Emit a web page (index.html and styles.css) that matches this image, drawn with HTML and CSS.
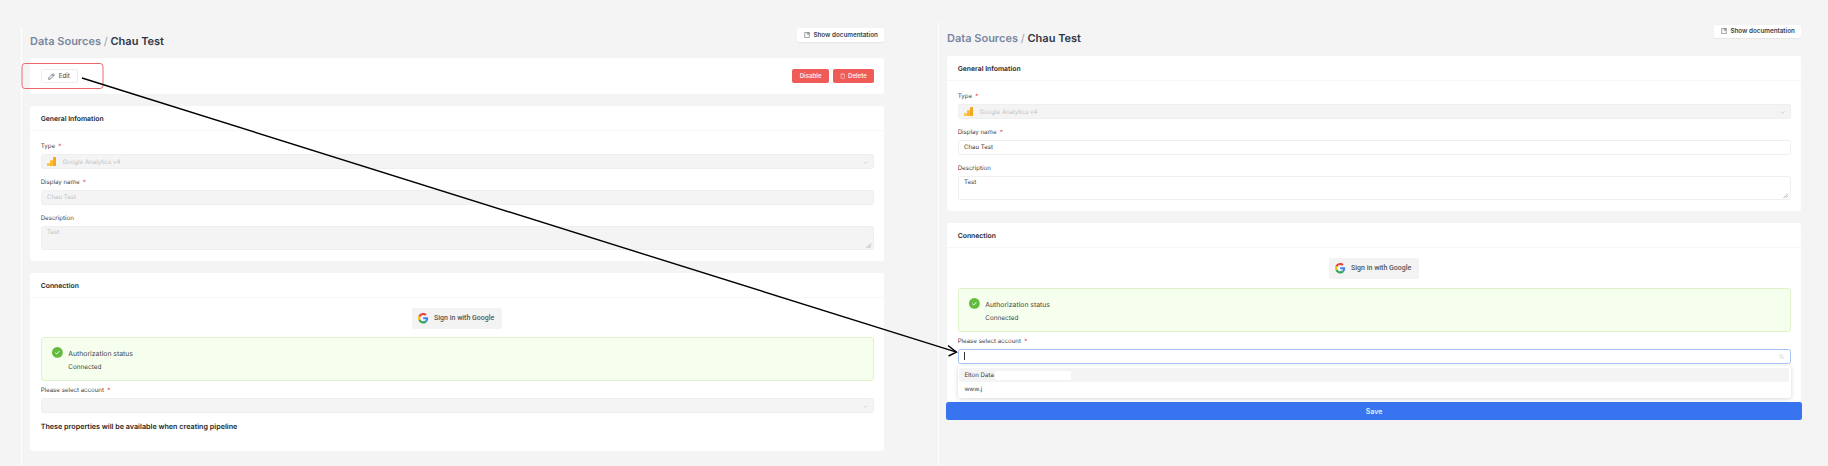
FILE: index.html
```html
<!DOCTYPE html>
<html lang="en">
<head>
<meta charset="utf-8">
<title>Chau Test</title>
<link rel="stylesheet" href="styles.css">
</head>
<body>
<main class="page">
  <section class="panel panel-left">
    <header class="head head-left">
      <h1 class="crumb"><span class="crumb-muted">Data Sources</span> <span class="crumb-sep">/</span> Chau Test</h1>
      <button class="doc-btn"><svg class="ico-doc" viewBox="0 0 12 12"><path d="M1.5.7h9v10.6h-9zM6.6.7v4l1.6-1 1.6 1v-4" fill="none" stroke="currentColor" stroke-width="1"/></svg>Show documentation</button>
    </header>
    <div class="card actions">
      <button class="btn-edit"><svg class="ico-edit" viewBox="0 0 12 12"><path d="M1.6 8 7.6 2a1.7 1.7 0 0 1 2.4 2.4l-6 6-2.8.5zM6.8 2.8l2.4 2.4" fill="none" stroke="currentColor" stroke-width="1.1"/></svg>Edit</button>
      <div class="actions-right">
        <button class="btn-red btn-disable">Disable</button>
        <button class="btn-red btn-delete"><svg class="ico-trash" viewBox="0 0 12 12"><path d="M1 2.5h10M4 2.5V1h4v1.5M2.3 2.5v8.7h7.4V2.5" fill="none" stroke="currentColor" stroke-width="1"/></svg>Delete</button>
      </div>
    </div>
    <div class="card">
      <h2 class="card-title">General Infomation</h2>
      <div class="card-body">
        <div class="field">
          <label class="label">Type <em class="req">*</em></label>
          <div class="control disabled select">
            <svg class="ico-ga" viewBox="0 0 10 10"><rect x="0" y="6.4" width="3.6" height="3.6" fill="#f9c74f"/><rect x="3.2" y="3.4" width="3.6" height="6.6" fill="#fbbc2c"/><rect x="6.4" y="0" width="3.6" height="10" fill="#f5a623"/></svg>
            <span class="ghost">Google Analytics v4</span>
            <svg class="ico-chev" viewBox="0 0 10 10"><path d="M1 3l4 4 4-4" fill="none" stroke="currentColor" stroke-width="1"/></svg>
          </div>
        </div>
        <div class="field">
          <label class="label">Display name <em class="req">*</em></label>
          <div class="control disabled"><span class="ghost">Chau Test</span></div>
        </div>
        <div class="field-last">
          <label class="label">Description</label>
          <div class="control area disabled"><span class="ghost">Test</span><svg class="ico-grip" viewBox="0 0 6 6"><path d="M.5 5.5l5-5M3 5.5l2.5-2.5" fill="none" stroke="#777" stroke-width=".6"/></svg></div>
        </div>
      </div>
    </div>
    <div class="card">
      <h2 class="card-title">Connection</h2>
      <div class="card-body conn">
        <button class="google"><svg class="ico-g" viewBox="0 0 48 48"><path fill="#EA4335" d="M24 9.5c3.54 0 6.71 1.22 9.21 3.6l6.85-6.85C35.9 2.38 30.47 0 24 0 14.62 0 6.51 5.38 2.56 13.22l7.98 6.19C12.43 13.72 17.74 9.5 24 9.5z"/><path fill="#4285F4" d="M46.98 24.55c0-1.57-.15-3.09-.38-4.55H24v9.02h12.94c-.58 2.96-2.26 5.48-4.78 7.18l7.73 6c4.51-4.18 7.09-10.36 7.09-17.65z"/><path fill="#FBBC05" d="M10.53 28.59c-.48-1.45-.76-2.99-.76-4.59s.27-3.14.76-4.59l-7.98-6.19C.92 16.46 0 20.12 0 24c0 3.88.92 7.54 2.56 10.78l7.97-6.19z"/><path fill="#34A853" d="M24 48c6.48 0 11.93-2.13 15.89-5.81l-7.73-6c-2.15 1.45-4.92 2.3-8.16 2.3-6.26 0-11.57-4.22-13.47-9.91l-7.98 6.19C6.51 42.62 14.62 48 24 48z"/></svg>Sign in with Google</button>
        <div class="alert">
          <div class="alert-row"><svg class="ico-ok" viewBox="0 0 12 12"><circle cx="6" cy="6" r="6" fill="#62bb3e"/><path d="M3.6 6.2l1.7 1.6 3-3.3" fill="none" stroke="#fff" stroke-width="1"/></svg>Authorization status</div>
          <div class="alert-sub">Connected</div>
        </div>
        <label class="label">Please select account <em class="req">*</em></label>
        <div class="control disabled select"><svg class="ico-chev" viewBox="0 0 10 10"><path d="M1 3l4 4 4-4" fill="none" stroke="currentColor" stroke-width="1"/></svg></div>
        <p class="props">These properties will be available when creating pipeline</p>
      </div>
    </div>
  </section>

  <section class="panel panel-right">
    <header class="head head-right">
      <h1 class="crumb"><span class="crumb-muted">Data Sources</span> <span class="crumb-sep">/</span> Chau Test</h1>
      <button class="doc-btn"><svg class="ico-doc" viewBox="0 0 12 12"><path d="M1.5.7h9v10.6h-9zM6.6.7v4l1.6-1 1.6 1v-4" fill="none" stroke="currentColor" stroke-width="1"/></svg>Show documentation</button>
    </header>
    <div class="card">
      <h2 class="card-title">General Infomation</h2>
      <div class="card-body">
        <div class="field">
          <label class="label">Type <em class="req">*</em></label>
          <div class="control disabled select">
            <svg class="ico-ga" viewBox="0 0 10 10"><rect x="0" y="6.4" width="3.6" height="3.6" fill="#f9c74f"/><rect x="3.2" y="3.4" width="3.6" height="6.6" fill="#fbbc2c"/><rect x="6.4" y="0" width="3.6" height="10" fill="#f5a623"/></svg>
            <span class="ghost">Google Analytics v4</span>
            <svg class="ico-chev" viewBox="0 0 10 10"><path d="M1 3l4 4 4-4" fill="none" stroke="currentColor" stroke-width="1"/></svg>
          </div>
        </div>
        <div class="field">
          <label class="label">Display name <em class="req">*</em></label>
          <div class="control"><span class="value">Chau Test</span></div>
        </div>
        <div class="field-last">
          <label class="label">Description</label>
          <div class="control area"><span class="value">Test</span><svg class="ico-grip" viewBox="0 0 6 6"><path d="M.5 5.5l5-5M3 5.5l2.5-2.5" fill="none" stroke="#777" stroke-width=".6"/></svg></div>
        </div>
      </div>
    </div>
    <div class="card card-open">
      <h2 class="card-title">Connection</h2>
      <div class="card-body conn conn-open">
        <button class="google"><svg class="ico-g" viewBox="0 0 48 48"><path fill="#EA4335" d="M24 9.5c3.54 0 6.71 1.22 9.21 3.6l6.85-6.85C35.9 2.38 30.47 0 24 0 14.62 0 6.51 5.38 2.56 13.22l7.98 6.19C12.43 13.72 17.74 9.5 24 9.5z"/><path fill="#4285F4" d="M46.98 24.55c0-1.57-.15-3.09-.38-4.55H24v9.02h12.94c-.58 2.96-2.26 5.48-4.78 7.18l7.73 6c4.51-4.18 7.09-10.36 7.09-17.65z"/><path fill="#FBBC05" d="M10.53 28.59c-.48-1.45-.76-2.99-.76-4.59s.27-3.14.76-4.59l-7.98-6.19C.92 16.46 0 20.12 0 24c0 3.88.92 7.54 2.56 10.78l7.97-6.19z"/><path fill="#34A853" d="M24 48c6.48 0 11.93-2.13 15.89-5.81l-7.73-6c-2.15 1.45-4.92 2.3-8.16 2.3-6.26 0-11.57-4.22-13.47-9.91l-7.98 6.19C6.51 42.62 14.62 48 24 48z"/></svg>Sign in with Google</button>
        <div class="alert">
          <div class="alert-row"><svg class="ico-ok" viewBox="0 0 12 12"><circle cx="6" cy="6" r="6" fill="#62bb3e"/><path d="M3.6 6.2l1.7 1.6 3-3.3" fill="none" stroke="#fff" stroke-width="1"/></svg>Authorization status</div>
          <div class="alert-sub">Connected</div>
        </div>
        <label class="label">Please select account <em class="req">*</em></label>
        <div class="control focus">
          <span class="caret"></span>
          <svg class="ico-search" viewBox="0 0 10 10"><circle cx="4" cy="4" r="2.8" fill="none" stroke="currentColor" stroke-width="1.2"/><path d="M6 6l3 3" stroke="currentColor" stroke-width="1.4"/></svg>
          <div class="menu">
            <div class="option option-active">Elton Data<span class="mask"></span></div>
            <div class="option">www.j</div>
          </div>
        </div>
      </div>
    </div>
    <button class="save">Save</button>
  </section>
</main>
<svg class="overlay" viewBox="0 0 1828 466" aria-hidden="true">
  <rect x="22" y="63.5" width="81" height="25" rx="3" fill="none" stroke="#ec6a6a" stroke-width="1"/>
  <path d="M82 78 956.5 352.2" fill="none" stroke="#000" stroke-width="1.4"/>
  <path d="M948 345.5 956.5 352.2 948.5 356" fill="none" stroke="#000" stroke-width="1.4"/>
</svg>
</body>
</html>
```
FILE: styles.css
```css
* { box-sizing: border-box; }
html, body { margin: 0; height: 100%; }
body {
  background: #f4f4f4;
  font-family: Inter, "Liberation Sans", sans-serif;
  color: #2b2b2b;
  overflow: hidden;
  text-rendering: geometricPrecision;
}
.page { display: flex; height: 466px; padding-left: 21px; }
.panel { border-left: 1px solid #fff; padding-left: 8px; }
.panel-left { width: 917px; margin-top: 28px; height: 438px; }
.panel-right { width: 864px; margin-top: 22px; height: 444px; }

.head { display: flex; justify-content: space-between; align-items: flex-start; width: 854px; }
.head-left { height: 30px; }
.head-right { height: 34px; padding-top: 2.5px; }
.crumb { margin: 5.5px 0 0; font-size: 11px; line-height: 14px; font-weight: 600; color: #2f3646; white-space: nowrap; }
.head-right .crumb { margin-top: 6.5px; }
.crumb-muted { color: #7a87a1; }
.crumb-sep { color: #9aa3b5; font-weight: 400; }
.doc-btn {
  display: flex; align-items: center; gap: 3.7px;
  width: 87.3px; height: 13.5px; padding: 0 0 0 7px;
  background: #fff; border: 0; border-radius: 2px;
  box-shadow: 0 .5px 1px rgba(0,0,0,.06);
  font: 600 6.3px/1 Inter, sans-serif; color: #3b3f4a; white-space: nowrap;
}
.ico-doc { width: 6px; height: 6px; color: #444; flex: none; }

.card { width: 854px; background: #fff; border-radius: 3px; margin-bottom: 12px; }
.card-title {
  margin: 0; height: 25px; padding: 1px 10.7px 0;
  display: flex; align-items: center;
  font-size: 6.85px; font-weight: 600; color: #22252b;
  border-bottom: 1px solid #f7f7f7;
}
.card-body { padding: 11px 10.3px 11px 10.7px; }
.field { height: 36px; }
.label { display: block; height: 8px; margin-bottom: 4px; font-size: 6.125px; line-height: 10px; color: #444; }
.req { font-style: normal; color: #e5484d; margin-left: 1.5px; }

.control {
  position: relative; display: flex; align-items: center;
  height: 14.7px; padding: 0 5.3px;
  background: #fff; border: 1px solid #efefef; border-radius: 2.5px;
}
.control.disabled { background: #f4f4f4; border-color: #efefef; }
.select { height: 15px; }
.area { height: 24px; align-items: flex-start; }
.ghost { padding-top: 2px; font-size: 6.125px; line-height: 8px; color: #c2c2c2; }
.value { padding-top: 2px; font-size: 6.125px; line-height: 8px; color: #3a3a3a; }
.ico-ga { width: 9.5px; height: 9.5px; margin-right: 6px; flex: none; }
.ico-chev { position: absolute; right: 5px; top: 4.5px; width: 5px; height: 5px; color: #b5b5b5; }
.ico-grip { position: absolute; right: 1px; bottom: 1px; width: 5.5px; height: 5.5px; }

.actions {
  height: 36px; padding: 0 9.7px 0 10.5px;
  display: flex; align-items: center; justify-content: space-between;
}
.btn-edit {
  display: flex; align-items: center; justify-content: center; gap: 3.5px;
  width: 37px; height: 14.5px; padding: 0;
  background: #fff; border: 1px solid #eceef2; border-radius: 2px;
  font: 500 6.125px/1 Inter, sans-serif; color: #555b6a;
}
.ico-edit { width: 7px; height: 7px; color: #3a4050; flex: none; }
.actions-right { display: flex; gap: 3.7px; }
.btn-red {
  display: flex; align-items: center; justify-content: center; gap: 2.5px;
  height: 14.5px; padding: 0;
  background: #ef5b57; border: 0; border-radius: 2px;
  font: 600 6.125px/1 Inter, sans-serif; color: #fde9e8;
}
.btn-disable { width: 36.7px; }
.btn-delete { width: 41.7px; }
.ico-trash { width: 5.5px; height: 6px; flex: none; }

.conn { padding: 10px 10.3px 20px 10.7px; display: flex; flex-direction: column; }
.conn-open { padding-bottom: 38.3px; }
.google {
  align-self: center; display: flex; align-items: center; gap: 5.5px;
  width: 90px; height: 21px; padding: 0 0 0 6px;
  background: #f3f3f3; border: 0; border-radius: 2px;
  font: 500 7px/1 Roboto, Inter, sans-serif; color: #555; white-space: nowrap;
}
.ico-g { width: 10.4px; height: 10.4px; flex: none; }
.alert {
  margin: 8px 0 5px; height: 44px; padding: 9px 10.4px 0;
  background: #f6ffed; border: 1px solid #dff2cb; border-radius: 3px;
}
.conn-open .alert { margin-top: 9px; }
.alert-row { display: flex; align-items: flex-start; gap: 5.4px; height: 11px; font-size: 6.85px; line-height: 13px; color: #444; }
.ico-ok { width: 10.8px; height: 10.8px; flex: none; }
.alert-sub { margin: 5.4px 0 0 16.2px; font-size: 6.4px; line-height: 8px; color: #444; }
.props { margin: 10px 0 0; font-size: 7.2px; line-height: 8px; font-weight: 600; color: #1f1f1f; }

.focus { border-color: #a9c3f5; overflow: visible; }
.caret { width: 1px; height: 8px; background: #333; }
.ico-search { position: absolute; right: 5px; top: 4px; width: 5.5px; height: 5.5px; color: #cfcfcf; }
.menu {
  position: absolute; left: -1px; right: -1px; top: 16px;
  height: 32px; padding: 2px 1.7px;
  background: #fff; border-radius: 3px;
  box-shadow: 0 1px 5px rgba(0,0,0,.16);
}
.option {
  display: flex; align-items: center; height: 14px; padding-left: 5px;
  font-size: 6.125px; color: #3a3a3a; border-radius: 2px;
}
.option-active { background: #f4f4f4; }
.mask { width: 76px; height: 9px; margin-left: 1.5px; background: #fff; }

.card-open { margin-bottom: 0; }
.save {
  display: block; width: 856px; height: 18px; margin-left: -1px; padding: 1.5px 0 0;
  background: #3874f0; border: 0; border-radius: 2.5px;
  font: 600 7px/1 Inter, sans-serif; color: #e8effd;
}
.overlay { position: absolute; left: 0; top: 0; width: 1828px; height: 466px; pointer-events: none; }
```
